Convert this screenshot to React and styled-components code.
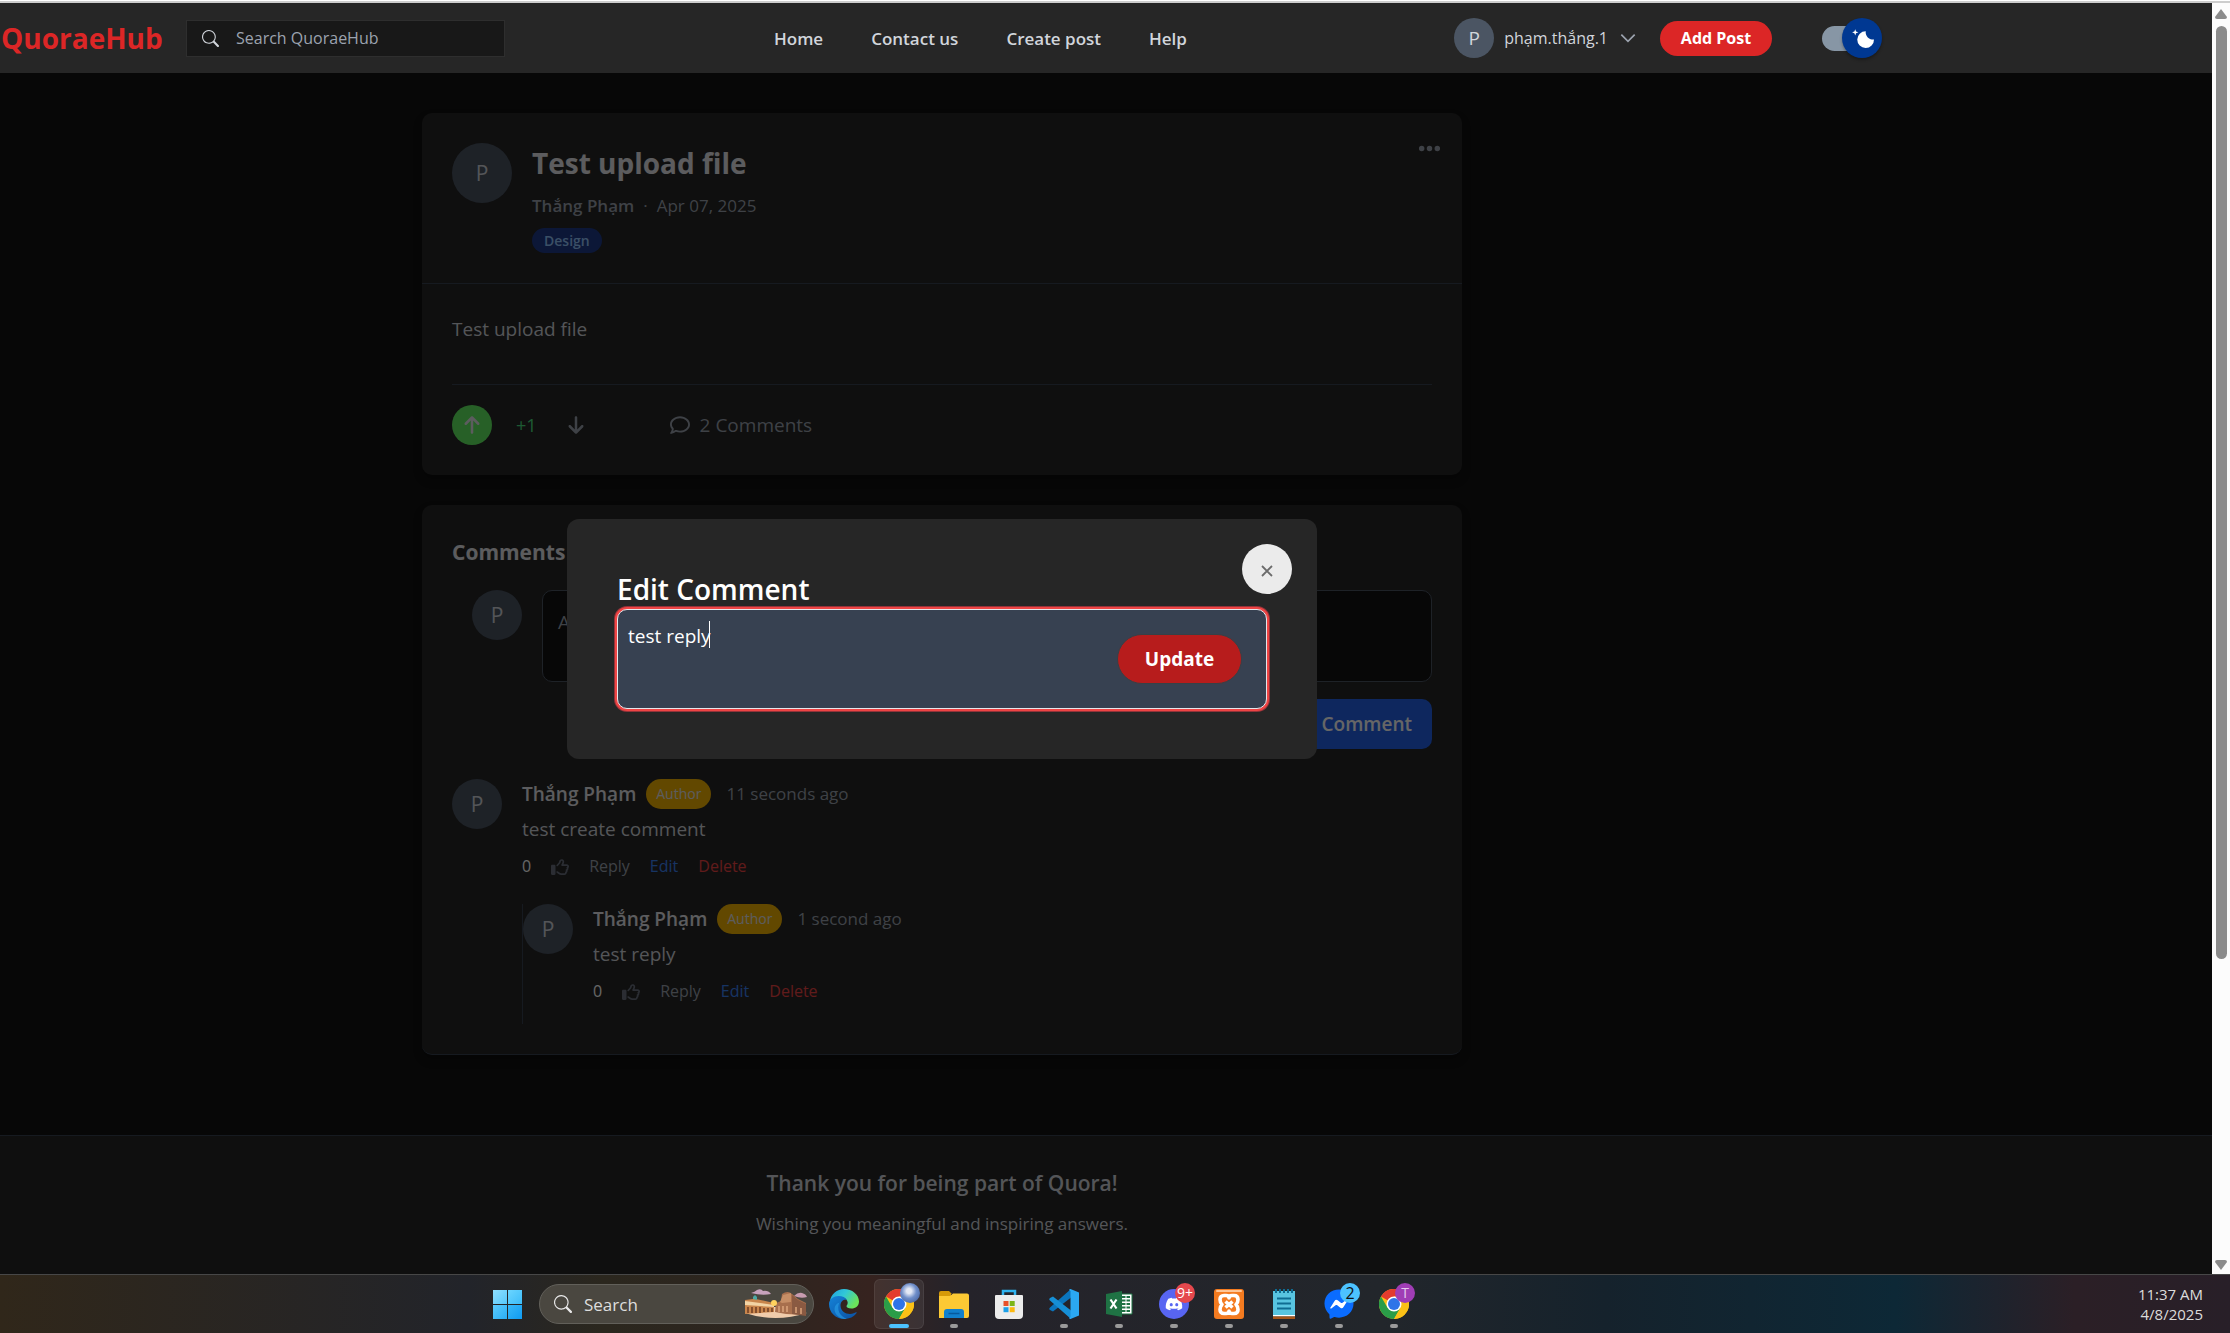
import React, { useState } from "react";
import styled, { createGlobalStyle, css } from "styled-components";
import {
  FaArrowUp,
  FaArrowDown,
  FaRegComment,
  FaRegThumbsUp,
  FaEllipsis,
  FaDiscord,
  FaFacebookMessenger,
} from "react-icons/fa6";
import { BsSearch } from "react-icons/bs";
import { SiXampp } from "react-icons/si";

const GlobalStyle = createGlobalStyle`
  *, *::before, *::after { box-sizing: border-box; }
  body {
    margin: 0;
    background: #121212;
    color: #fff;
    font-family: "Open Sans", "Noto Sans", sans-serif;
    font-size: 19px;
    line-height: 30px;
  }
  h1, h2, h3, p { margin: 0; }
  button, input, textarea { font: inherit; color: inherit; }
  button { padding: 0; border: 0; background: none; cursor: pointer; }
  a { color: inherit; text-decoration: none; }
`;

const Screen = styled.div`
  display: flex;
  flex-direction: column;
  height: 100vh;
  overflow: hidden;
`;

const WindowEdge = styled.div`
  flex: none;
  height: 3px;
  background: #cdcdcd;
  border-top: 1px solid #fff;
`;

const Browser = styled.div`
  flex: 1;
  min-height: 0;
  display: flex;
`;

const Viewport = styled.div`
  position: relative;
  flex: 1;
  min-width: 0;
  display: flex;
  flex-direction: column;
  overflow: hidden;
  background: #121212;
`;

const ScrollTrack = styled.div`
  flex: none;
  width: 18px;
  background: #fcfcfc;
  display: flex;
  flex-direction: column;
  align-items: center;
  padding: 6px 0 4px;
`;

const ScrollArrow = styled.svg`
  flex: none;
  width: 12px;
  height: 10px;
  fill: #8b8b8b;
`;

const ScrollThumb = styled.div`
  width: 11px;
  height: 74%;
  margin: 7px 0 auto;
  border-radius: 6px;
  background: #8b8b8b;
`;

/* ---------- header ---------- */

const Header = styled.header`
  position: relative;
  z-index: 2;
  flex: none;
  background: #262626;
`;

const HeaderInner = styled.div`
  display: flex;
  align-items: center;
  width: 100%;
  max-width: 1884px;
  height: 70px;
  padding: 0 2px 0 1px;
`;

const Logo = styled.a`
  width: 185px;
  color: #dc2626;
  font-size: 28px;
  font-weight: 700;
  line-height: 40px;
`;

const SearchBox = styled.label`
  display: flex;
  align-items: center;
  gap: 17px;
  width: 319px;
  height: 37px;
  padding: 0 15px;
  background: #181818;
  border: 1px solid #2e2e2e;
  color: #d1d5db;
`;

const SearchInput = styled.input`
  flex: 1;
  min-width: 0;
  padding: 0;
  border: 0;
  outline: 0;
  background: none;
  font-size: 16px;
  line-height: 25px;
  &::placeholder { color: #9ca3af; opacity: 1; }
`;

const Nav = styled.nav`
  display: flex;
  gap: 48px;
  margin-left: 269px;
  color: #d1d5db;
  font-size: 17px;
  font-weight: 600;
  line-height: 25px;
`;

const Account = styled.div`
  display: flex;
  align-items: center;
  margin-left: auto;
`;

const AccountButton = styled.button`
  display: flex;
  align-items: center;
  gap: 10px;
  margin-right: 22px;
  color: #d1d5db;
  font-size: 16px;
`;

const Chevron = styled.svg`
  width: 20px;
  height: 20px;
  fill: none;
  stroke: #9ca3af;
  stroke-width: 2;
`;

const AddPost = styled.button`
  width: 112px;
  height: 35px;
  margin-right: 50px;
  border-radius: 18px;
  background: #dc2626;
  color: #fff;
  font-size: 16px;
  font-weight: 700;
  line-height: 25px;
`;

const ThemeSwitch = styled.label`
  position: relative;
  width: 60px;
  height: 40px;
  display: flex;
  align-items: center;
  cursor: pointer;
`;

const SwitchInput = styled.input`
  position: absolute;
  inset: 0;
  margin: 0;
  opacity: 0;
`;

const SwitchTrack = styled.span`
  width: 50px;
  height: 25px;
  border-radius: 13px;
  background: #8796a5;
`;

const SwitchThumb = styled.span`
  position: absolute;
  top: 0;
  right: 0;
  display: grid;
  place-items: center;
  width: 40px;
  height: 40px;
  border-radius: 50%;
  background: #003892;
  box-shadow: 0 2px 3px rgba(0, 0, 0, 0.3);
`;

const Avatar = styled.span`
  flex: none;
  display: grid;
  place-items: center;
  width: ${(p) => p.$size}px;
  height: ${(p) => p.$size}px;
  border-radius: 50%;
  background: #4b5563;
  color: #d1d5db;
  font-size: ${(p) => (p.$size > 40 ? 21 : 19)}px;
`;

/* ---------- post ---------- */

const Main = styled.main`
  width: 100%;
  max-width: 1884px;
  padding: 40px 422px 80px;
  display: flex;
  flex-direction: column;
  gap: 30px;
`;

const Card = styled.section`
  border-radius: 10px;
  background: #262626;
  box-shadow: 0 5px 8px rgba(0, 0, 0, 0.3);
`;

const PostHead = styled.div`
  display: flex;
  align-items: flex-start;
  gap: 20px;
  padding: 30px;
  border-bottom: 1px solid #374151;
`;

const PostInfo = styled.div`
  flex: 1;
  display: flex;
  flex-direction: column;
  align-items: flex-start;
  gap: 10px;
`;

const PostTitle = styled.h1`
  color: #e5e7eb;
  font-size: 28px;
  font-weight: 700;
  line-height: 40px;
`;

const Meta = styled.p`
  display: flex;
  gap: 9px;
  color: #9ca3af;
  font-size: 17px;
  line-height: 25px;
`;

const MetaName = styled.span`
  font-weight: 600;
`;

const Tag = styled.span`
  padding: 0 12px;
  border-radius: 13px;
  background: #1e3a8a;
  color: #93c5fd;
  font-size: 14px;
  font-weight: 600;
  line-height: 25px;
`;

const MoreButton = styled.button`
  height: 10px;
  margin-right: -10px;
  color: #9ca3af;
  display: grid;
  place-content: center;
`;

const PostBody = styled.div`
  padding: 30px;
  color: #d1d5db;
`;

const VoteBar = styled.div`
  display: flex;
  align-items: center;
  gap: 24px;
  margin-top: 40px;
  padding-top: 20px;
  border-top: 1px solid #374151;
  color: #9ca3af;
`;

const VoteButton = styled.button`
  display: grid;
  place-items: center;
  width: ${(p) => (p.$active ? 40 : 30)}px;
  height: 40px;
  border-radius: 50%;
  ${(p) => p.$active && css`background: #62f162; color: #e5e7eb;`}
`;

const Score = styled.span`
  color: #4ade80;
  font-size: 18px;
  font-weight: 500;
`;

const CommentCount = styled.button`
  display: flex;
  align-items: center;
  gap: 10px;
  margin-left: 55px;
`;

/* ---------- comments ---------- */

const CommentsCard = styled(Card)`
  padding: 30px;
  border-bottom: 1px solid #374151;
`;

const SectionTitle = styled.h2`
  color: #e5e7eb;
  font-size: 21px;
  font-weight: 700;
  line-height: 35px;
`;

const CommentForm = styled.form`
  display: flex;
  flex-wrap: wrap;
  align-items: flex-start;
  justify-content: flex-end;
  gap: 17px 20px;
  margin: 20px 0 30px;
  padding-left: 20px;
`;

const CommentInput = styled.textarea`
  flex: 1;
  height: 92px;
  padding: 16px 15px;
  border: 1px solid #4b5563;
  border-radius: 10px;
  outline: 0;
  background: #121212;
  resize: none;
  &::placeholder { color: #9ca3af; opacity: 1; }
`;

const FormFooter = styled.div`
  width: 100%;
  display: flex;
  justify-content: flex-end;
`;

const SubmitButton = styled.button`
  height: 50px;
  padding: 0 20px;
  border-radius: 10px;
  background: #2563eb;
  color: #fff;
  font-weight: 600;
`;

const CommentItem = styled.article`
  display: flex;
  align-items: flex-start;
  gap: 20px;
`;

const CommentBody = styled.div`
  flex: 1;
`;

const CommentHead = styled.div`
  display: flex;
  align-items: center;
`;

const Author = styled.span`
  color: #e5e7eb;
  font-weight: 600;
`;

const AuthorBadge = styled.span`
  margin: 0 15px 0 10px;
  padding: 0 10px;
  border-radius: 15px;
  background: #f5b400;
  color: #e5e7eb;
  font-size: 14px;
`;

const Time = styled.time`
  color: #9ca3af;
  font-size: 17px;
`;

const CommentText = styled.p`
  margin: 5px 0 10px;
  color: #d1d5db;
`;

const Actions = styled.div`
  display: flex;
  align-items: center;
  gap: 20px;
  font-size: 16px;
  line-height: 25px;
`;

const Action = styled.button`
  height: 25px;
  display: flex;
  align-items: center;
  color: ${(p) => p.$color || "#9ca3af"};
`;

const Replies = styled.div`
  margin-top: 25px;
  padding-bottom: 20px;
  border-left: 1px solid #374151;
`;

/* ---------- footer ---------- */

const Footer = styled.footer`
  flex: 1 0 auto;
  border-top: 1px solid #374151;
  background: #262626;
`;

const FooterInner = styled.div`
  display: flex;
  flex-direction: column;
  gap: 10px;
  max-width: 1884px;
  padding: 30px;
  text-align: center;
  color: #d1d5db;
`;

const FooterTitle = styled.h3`
  font-size: 21px;
  font-weight: 600;
  line-height: 35px;
`;

const FooterText = styled.p`
  font-size: 17px;
  line-height: 25px;
`;

/* ---------- dialog ---------- */

const Overlay = styled.div`
  position: absolute;
  inset: 0;
  z-index: 1;
  background: rgba(0, 0, 0, 0.6);
`;

const OverlayInner = styled.div`
  display: grid;
  place-items: center;
  width: 100%;
  max-width: 1884px;
  height: 100%;
`;

const Dialog = styled.div`
  position: relative;
  width: 750px;
  padding: 50px;
  border-radius: 12px;
  background: #262626;
`;

const DialogTitle = styled.h2`
  font-size: 28px;
  font-weight: 600;
  line-height: 40px;
`;

const CloseButton = styled.button`
  position: absolute;
  top: 25px;
  right: 25px;
  display: grid;
  place-items: center;
  width: 50px;
  height: 50px;
  padding-top: 4px;
  border-radius: 50%;
  background: #ebebeb;
`;

const EditField = styled.div`
  position: relative;
  display: flex;
`;

const EditInput = styled.textarea`
  flex: 1;
  height: 100px;
  padding: 11px 10px;
  border: 1px solid #e5e7eb;
  border-radius: 10px;
  outline: 0;
  background: #374151;
  box-shadow: 0 0 0 2px #ef4444, 0 0 0 3px #93333a;
  caret-color: transparent;
  resize: none;
`;

const Caret = styled.span`
  position: absolute;
  top: 12px;
  left: 92px;
  width: 1px;
  height: 27px;
  background: #fff;
`;

const UpdateButton = styled.button`
  position: absolute;
  top: 25px;
  right: 25px;
  width: 125px;
  height: 50px;
  border: 1px solid #374046;
  border-radius: 25px;
  background: #b71c1c;
  color: #fff;
  font-weight: 700;
`;

/* ---------- taskbar ---------- */

const Taskbar = styled.div`
  flex: none;
  display: flex;
  align-items: center;
  height: 59px;
  padding: 0 27px 0 493px;
  border-top: 1px solid #474747;
  background: linear-gradient(
    90deg,
    #30271a 0,
    #22242a 21%,
    #2b271e 27%,
    #2d251f 34%,
    #36231f 39%,
    #25232a 43%,
    #22262b 62%,
    #15222c 72%,
    #0d2836 85%,
    #2b1f26 93%,
    #281f28 100%
  );
`;

const StartButton = styled.button`
  display: grid;
  grid-template-columns: 14px 14px;
  gap: 1px;
  margin-right: 17px;
`;

const Pane = styled.span`
  height: 14px;
  background: ${(p) => p.$fill};
`;

const TaskSearch = styled.label`
  display: flex;
  align-items: center;
  gap: 12px;
  width: 275px;
  height: 40px;
  margin-right: 5px;
  padding: 0 5px 0 14px;
  border: 1px solid #62605a;
  border-radius: 20px;
  background: #4a4740;
`;

const TaskInput = styled(SearchInput)`
  font-size: 17px;
  &::placeholder { color: #dedede; }
`;

const Apps = styled.div`
  display: flex;
  gap: 5px;
`;

const AppButton = styled.button`
  position: relative;
  display: grid;
  place-items: center;
  width: 50px;
  height: 50px;
  border-radius: 6px;
  ${(p) => p.$active && css`
    background: rgba(255, 255, 255, 0.07);
    box-shadow: inset 0 0 0 1px rgba(255, 255, 255, 0.07);
  `}
`;

const Running = styled.span`
  position: absolute;
  bottom: 1px;
  left: 50%;
  width: ${(p) => (p.$active ? 20 : 8)}px;
  height: 4px;
  border-radius: 2px;
  background: ${(p) => (p.$active ? "#4cc2ff" : "#9a9a9a")};
  transform: translateX(-50%);
`;

const AppBadge = styled.span`
  position: absolute;
  top: 4px;
  right: 4px;
  width: 20px;
  height: 20px;
  border-radius: 50%;
  background: ${(p) => p.$bg};
  color: ${(p) => p.$color || "#fff"};
  font-size: ${(p) => p.$text || 14}px;
  line-height: 20px;
  text-align: center;
`;

const Clock = styled.div`
  margin-left: auto;
  color: #dcdcdc;
  font-size: 15px;
  line-height: 20px;
  text-align: right;
`;

const Svg = ({ size = 30, children, ...rest }) => (
  <svg width={size} height={size} viewBox="0 0 30 30" aria-hidden="true" {...rest}>
    {children}
  </svg>
);

const EdgeIcon = () => (
  <Svg>
    <defs>
      <linearGradient id="edgeTop" x1="0" y1="0" x2="1" y2="0.5">
        <stop offset="0" stopColor="#1e9de0" />
        <stop offset="0.5" stopColor="#31c8d8" />
        <stop offset="1" stopColor="#6be35a" />
      </linearGradient>
      <linearGradient id="edgeLow" x1="0" y1="0" x2="1" y2="1">
        <stop offset="0" stopColor="#1583d8" />
        <stop offset="1" stopColor="#0b4fa0" />
      </linearGradient>
    </defs>
    <path d="M1 12C2 5 8 0 15 0c8 0 15 5.500 15 12.500 0 4.500-3.500 7-7.500 7-3.500 0-5-1.300-5-2.300 0-.8 1.200-1.400 1.200-3.400 0-3-3-5.600-7-5.600C6 8.200 2 11 1 12z" fill="url(#edgeTop)" />
    <path d="M0 15c0-5 5-8 9.500-8 4 0 7 1.500 8.500 4-3-1-6.500 1-6.500 5.500 0 5 4.500 8.500 9.500 8.500 3 0 4.500-1 6-1.700.6-.2 1 .2.600.8C25 28 20.500 30 15 30 6.700 30 0 23.300 0 15z" fill="url(#edgeLow)" />
    <path d="M10.500 13.500C7 20 11 28 18 29.700c-1 .2-2 .3-3 .3C9 29 5.500 24.500 5.500 20c0-3 2-5.500 5-6.500z" fill="#2aa0ea" opacity="0.600" />
  </Svg>
);

const ChromeIcon = () => (
  <Svg>
    <circle cx="15" cy="15" r="15" fill="#fbc116" />
    <path d="M15 15L2 7.500A15 15 0 0 1 28 7.500H15z" fill="#e33b2e" />
    <path d="M2 7.500A15 15 0 0 0 15 30l6.500-11.200L15 15 8.500 18.800z" fill="#2a9d48" />
    <path d="M15 7.500h13A15 15 0 0 1 15 30l6.500-11.200z" fill="#fbc116" />
    <circle cx="15" cy="15" r="7.500" fill="#fff" />
    <circle cx="15" cy="15" r="6" fill="#2f74e8" />
  </Svg>
);

const FolderIcon = () => (
  <Svg>
    <path d="M0 4q0-2 2-2h8l3 3h-1v6H0z" fill="#d69a08" />
    <path d="M0 7h11l3-2.500h14q2 0 2 2V27q0 2-2 2H0z" fill="#fcc934" />
    <path d="M5 29v-6q0-3 3-3h14q3 0 3 3v6z" fill="#1180cc" />
    <path d="M9.500 24.500h11" stroke="#075a9c" strokeWidth="1.500" />
  </Svg>
);

const StoreIcon = () => (
  <Svg>
    <path d="M9 7V2h12v5" fill="none" stroke="#2fb2ee" strokeWidth="2.500" />
    <path d="M1 7q0-1 1-1h26q1 0 1 1v19q0 4-4 4H5q-4 0-4-4z" fill="#ececec" />
    <path d="M9.500 12h5v5h-5z" fill="#e8502a" />
    <path d="M15.700 12h5v5h-5z" fill="#7cb518" />
    <path d="M9.500 18.200h5v5h-5z" fill="#1c9fe8" />
    <path d="M15.700 18.200h5v5h-5z" fill="#fbb912" />
  </Svg>
);

const CodeIcon = () => (
  <Svg>
    <path d="M22 0v8.500L4 22.500 1 21q-1.500-1.300 0-2.600z" fill="#0b75bd" />
    <path d="M22 30v-8.500L4 7.500 1 9q-1.500 1.300 0 2.600z" fill="#168fd6" />
    <path d="M21.500 0L30 3.500v23L21.500 30q-1 0-1.500-1l1.500-1V2L20 1q.5-1 1.500-1z" fill="#2ba8f2" />
  </Svg>
);

const ExcelIcon = () => (
  <Svg>
    <path d="M15 5h13v20H15z" fill="#fff" stroke="#1f7244" strokeWidth="1" />
    <path d="M18 8h8M18 11.500h8M18 15h8M18 18.500h8M18 22h8" stroke="#1f7244" strokeWidth="2" />
    <path d="M22 6v18" stroke="#fff" />
    <path d="M2 5l16-3v26L2 25z" fill="#1f7244" />
    <path d="M6.500 10.500l6 9M12.500 10.500l-6 9" stroke="#fff" strokeWidth="2.200" />
  </Svg>
);

const DiscordIcon = () => (
  <Svg>
    <circle cx="15" cy="15" r="15" fill="#5865f2" />
    <FaDiscord x="6" y="6" size="18" color="#fff" />
  </Svg>
);

const XamppIcon = () => (
  <Svg>
    <rect width="30" height="30" rx="3" fill="#f47b20" />
    <path d="M3 2h24" stroke="#ffc696" strokeWidth="2" strokeLinecap="round" />
    <g fill="none" stroke="#fff" strokeWidth="3.600" strokeLinejoin="round">
      <path d="M10 6.500h2q3 0 3 2.500 0-2.500 3-2.500h2q4 0 4 4 0 3-2 5 2 2 2 5 0 4-4 4h-2q-3 0-3-2.500 0 2.500-3 2.500h-2q-4 0-4-4 0-3 2-5-2-2-2-5 0-4 4-4z" />
      <path d="M11.500 12.500l7 6M18.500 12.500l-7 6" />
    </g>
  </Svg>
);

const NotepadIcon = () => (
  <Svg>
    <path d="M4 2h22v25H4z" fill="#58c4e0" />
    <path d="M4 26h22v1.500H4z" fill="#fff" />
    <path d="M4 27.500h22V30H4z" fill="#a5561a" />
    <path d="M7 0v4M11 0v4M15 0v4M19 0v4M23 0v4" stroke="#0f6c92" strokeWidth="2" />
    <path d="M8 9.500h14M8 14.500h14M8 19.500h14" stroke="#0f6c92" strokeWidth="1.800" />
  </Svg>
);

const MessengerIcon = () => (
  <Svg>
    <circle cx="15" cy="15" r="10" fill="#fff" />
    <FaFacebookMessenger x="0" y="0" size="30" color="#0a6cff" />
  </Svg>
);

const TownIcon = () => (
  <svg width="64" height="30" viewBox="0 0 64 30" aria-hidden="true">
    <path d="M7 4q4-1 6-3 4-2 6 1 5-1 8 3-9 2-20-1z" fill="#c7a2bd" />
    <path d="M50 7q4-4 8-3 4 1 5 4-6 2-13-1z" fill="#c79cb0" />
    <path d="M1 24q30 10 62 0l-25-6H22z" fill="#f0ccab" />
    <path d="M1 11l8-1 1-3 2 3 18 4v9L1 25z" fill="#c8854c" />
    <path d="M1 12l29 4v2L1 16z" fill="#f2d3a4" />
    <path d="M9 10v-2l2-2 2 2v3z" fill="#4aa9a5" />
    <path d="M4 18v6M8 18v6M12 18v6M16 18v6M20 19v4M24 19v4M28 19v4" stroke="#6e3d22" strokeWidth="1.500" />
    <path d="M31 23l1-9 5-2 1-7q6-4 10 0l6 5 8 4v12l-20-1z" fill="#a86f4d" />
    <path d="M36 13l3-7 8-2v9l-9 1z" fill="#c68e66" />
    <path d="M48 6l6 5 8 4v12l-14-2z" fill="#8a5a42" />
    <path d="M35 17v6M39 17v6M43 17v6M52 18v6M57 19v6" stroke="#dba57c" strokeWidth="1.500" />
    <circle cx="30" cy="14" r="3" fill="#ffd25e" />
  </svg>
);

const apps = [
  { name: "Microsoft Edge", Icon: EdgeIcon },
  { name: "Google Chrome", Icon: ChromeIcon, active: true, running: true, badge: { $bg: "radial-gradient(circle at 45% 40%, #e4e9f5 0 15%, #6f8ec9 45%, #33508f)" } },
  { name: "File Explorer", Icon: FolderIcon, running: true },
  { name: "Microsoft Store", Icon: StoreIcon },
  { name: "Visual Studio Code", Icon: CodeIcon, running: true },
  { name: "Excel", Icon: ExcelIcon, running: true },
  { name: "Discord", Icon: DiscordIcon, running: true, badge: { $bg: "#e5484d", label: "9+", $text: 14 } },
  { name: "XAMPP", Icon: XamppIcon, running: true },
  { name: "Notepad", Icon: NotepadIcon, running: true },
  { name: "Messenger", Icon: MessengerIcon, running: true, badge: { $bg: "#4cc2ff", label: "2", $color: "#111", $text: 16 } },
  { name: "Google Chrome, profile T", Icon: ChromeIcon, running: true, badge: { $bg: "#a03db5", label: "T", $color: "#e6c8ee" } },
];

function Comment({ text, time, children }) {
  return (
    <CommentItem>
      <Avatar $size={50}>P</Avatar>
      <CommentBody>
        <CommentHead>
          <Author>Thắng Phạm</Author>
          <AuthorBadge>Author</AuthorBadge>
          <Time>{time}</Time>
        </CommentHead>
        <CommentText>{text}</CommentText>
        <Actions>
          <span>0</span>
          <Action $color="#6b7280" aria-label="Like"><FaRegThumbsUp size={18} /></Action>
          <Action>Reply</Action>
          <Action $color="#3b82f6">Edit</Action>
          <Action $color="#ef4444">Delete</Action>
        </Actions>
        {children && <Replies>{children}</Replies>}
      </CommentBody>
    </CommentItem>
  );
}

function EditDialog() {
  const [value, setValue] = useState("test reply");
  return (
    <Overlay>
      <OverlayInner>
        <Dialog role="dialog" aria-labelledby="edit-title">
          <CloseButton aria-label="Close">
            <svg width="12" height="12" viewBox="0 0 12 12" stroke="#6b6b6b" strokeWidth="1.800">
              <path d="M1 1l10 10M11 1L1 11" />
            </svg>
          </CloseButton>
          <DialogTitle id="edit-title">Edit Comment</DialogTitle>
          <EditField>
            <EditInput aria-labelledby="edit-title" value={value} onChange={(e) => setValue(e.target.value)} />
            <Caret />
            <UpdateButton>Update</UpdateButton>
          </EditField>
        </Dialog>
      </OverlayInner>
    </Overlay>
  );
}

export default function App() {
  return (
    <Screen>
      <GlobalStyle />
      <WindowEdge />
      <Browser>
        <Viewport>
          <Header>
            <HeaderInner>
              <Logo href="#home">QuoraeHub</Logo>
              <SearchBox>
                <BsSearch size={17} />
                <SearchInput type="text" aria-label="Search QuoraeHub" placeholder="Search QuoraeHub" />
              </SearchBox>
              <Nav>
                <a href="#home">Home</a>
                <a href="#contact">Contact us</a>
                <a href="#create">Create post</a>
                <a href="#help">Help</a>
              </Nav>
              <Account>
                <AccountButton>
                  <Avatar $size={40}>P</Avatar>
                  phạm.thắng.1
                  <Chevron viewBox="0 0 24 24"><path d="M4 8l8 8 8-8" /></Chevron>
                </AccountButton>
                <AddPost>Add Post</AddPost>
                <ThemeSwitch>
                  <SwitchInput type="checkbox" defaultChecked aria-label="Dark mode" />
                  <SwitchTrack />
                  <SwitchThumb>
                    <svg width="25" height="25" viewBox="0 0 20 20" fill="#fff">
                      <path d="M4.200 2.500l-.7 1.800-1.800.7 1.800.7.7 1.800.6-1.800L6.700 5l-1.900-.7-.6-1.800zm15 8.300a6.700 6.700 0 11-6.600-6.600 5.800 5.800 0 006.600 6.600z" />
                    </svg>
                  </SwitchThumb>
                </ThemeSwitch>
              </Account>
            </HeaderInner>
          </Header>

          <Main>
            <Card>
              <PostHead>
                <Avatar $size={60}>P</Avatar>
                <PostInfo>
                  <PostTitle>Test upload file</PostTitle>
                  <Meta><MetaName>Thắng Phạm</MetaName><span>·</span><span>Apr 07, 2025</span></Meta>
                  <Tag>Design</Tag>
                </PostInfo>
                <MoreButton aria-label="More options"><FaEllipsis size={25} /></MoreButton>
              </PostHead>
              <PostBody>
                <p>Test upload file</p>
                <VoteBar>
                  <VoteButton $active aria-label="Upvote"><FaArrowUp size={20} /></VoteButton>
                  <Score>+1</Score>
                  <VoteButton aria-label="Downvote"><FaArrowDown size={20} /></VoteButton>
                  <CommentCount><FaRegComment size={20} />2 Comments</CommentCount>
                </VoteBar>
              </PostBody>
            </Card>

            <CommentsCard>
              <SectionTitle>Comments</SectionTitle>
              <CommentForm onSubmit={(e) => e.preventDefault()}>
                <Avatar $size={50}>P</Avatar>
                <CommentInput aria-label="Add a comment" placeholder="Add a comment..." />
                <FormFooter><SubmitButton>Comment</SubmitButton></FormFooter>
              </CommentForm>
              <Comment text="test create comment" time="11 seconds ago">
                <Comment text="test reply" time="1 second ago" />
              </Comment>
            </CommentsCard>
          </Main>

          <Footer>
            <FooterInner>
              <FooterTitle>Thank you for being part of Quora!</FooterTitle>
              <FooterText>Wishing you meaningful and inspiring answers.</FooterText>
            </FooterInner>
          </Footer>

          <EditDialog />
        </Viewport>
        <ScrollTrack>
          <ScrollArrow viewBox="0 0 12 10"><path d="M6 0l6 8q0 2-2 2H2q-2 0-2-2z" /></ScrollArrow>
          <ScrollThumb />
          <ScrollArrow viewBox="0 0 12 10"><path d="M6 10l6-8q0-2-2-2H2Q0 0 0 2z" /></ScrollArrow>
        </ScrollTrack>
      </Browser>

      <Taskbar>
        <StartButton aria-label="Start">
          <Pane $fill="linear-gradient(135deg, #8fe0ff, #57c8fb)" />
          <Pane $fill="linear-gradient(135deg, #6bd5ff, #3cbcf9)" />
          <Pane $fill="linear-gradient(135deg, #5bcbfc, #2aaef6)" />
          <Pane $fill="linear-gradient(135deg, #38b8f8, #109bf2)" />
        </StartButton>
        <TaskSearch>
          <BsSearch size={18} color="#e8e8e8" />
          <TaskInput type="text" aria-label="Search" placeholder="Search" />
          <TownIcon />
        </TaskSearch>
        <Apps>
          {apps.map(({ name, Icon, active, running, badge }) => (
            <AppButton key={name} aria-label={name} $active={active}>
              <Icon />
              {badge && <AppBadge {...badge}>{badge.label}</AppBadge>}
              {running && <Running $active={active} />}
            </AppButton>
          ))}
        </Apps>
        <Clock>
          <div>11:37 AM</div>
          <div>4/8/2025</div>
        </Clock>
      </Taskbar>
    </Screen>
  );
}
